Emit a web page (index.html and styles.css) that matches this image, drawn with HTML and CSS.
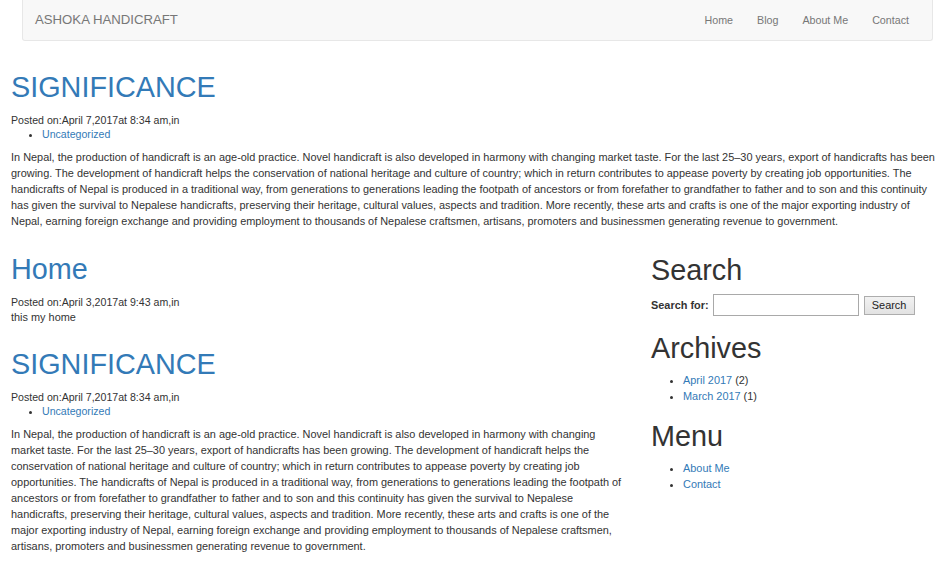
FILE: index.html
```html
<!DOCTYPE html>
<html lang="en">
<head>
<meta charset="utf-8">
<title>Ashoka Handicraft</title>
<link rel="stylesheet" href="styles.css">
</head>
<body>
<header class="navbar">
  <a class="brand" href="#">ASHOKA HANDICRAFT</a>
  <nav class="nav">
    <a href="#">Home</a>
    <a href="#">Blog</a>
    <a href="#">About Me</a>
    <a href="#">Contact</a>
  </nav>
</header>

<main class="page">
  <article class="post">
    <h1 class="post-title"><a href="#">SIGNIFICANCE</a></h1>
    <div class="meta">Posted on:April 7,2017at 8:34 am,in</div>
    <ul class="cats"><li><a href="#">Uncategorized</a></li></ul>
    <p class="body-text with-cats">In Nepal, the production of handicraft is an age-old practice. Novel handicraft is also developed in harmony with changing market taste. For the last 25–30 years, export of handicrafts has been growing. The development of handicraft helps the conservation of national heritage and culture of country; which in return contributes to appease poverty by creating job opportunities. The handicrafts of Nepal is produced in a traditional way, from generations to generations leading the footpath of ancestors or from forefather to grandfather to father and to son and this continuity has given the survival to Nepalese handicrafts, preserving their heritage, cultural values, aspects and tradition. More recently, these arts and crafts is one of the major exporting industry of Nepal, earning foreign exchange and providing employment to thousands of Nepalese craftsmen, artisans, promoters and businessmen generating revenue to government.</p>
  </article>

  <div class="row">
    <section class="content">
      <article class="post">
        <h1 class="post-title"><a href="#">Home</a></h1>
        <div class="meta">Posted on:April 3,2017at 9:43 am,in</div>
        <p class="body-text">this my home</p>
      </article>
      <article class="post">
        <h1 class="post-title"><a href="#">SIGNIFICANCE</a></h1>
        <div class="meta">Posted on:April 7,2017at 8:34 am,in</div>
        <ul class="cats"><li><a href="#">Uncategorized</a></li></ul>
        <p class="body-text with-cats">In Nepal, the production of handicraft is an age-old practice. Novel handicraft is also developed in harmony with changing market taste. For the last 25–30 years, export of handicrafts has been growing. The development of handicraft helps the conservation of national heritage and culture of country; which in return contributes to appease poverty by creating job opportunities. The handicrafts of Nepal is produced in a traditional way, from generations to generations leading the footpath of ancestors or from forefather to grandfather to father and to son and this continuity has given the survival to Nepalese handicrafts, preserving their heritage, cultural values, aspects and tradition. More recently, these arts and crafts is one of the major exporting industry of Nepal, earning foreign exchange and providing employment to thousands of Nepalese craftsmen, artisans, promoters and businessmen generating revenue to government.</p>
      </article>
    </section>

    <aside class="sidebar">
      <div class="widget">
        <h1 class="widget-title">Search</h1>
        <form class="search-form">
          <label class="search-label" for="s">Search for:</label>
          <input class="search-input" type="text" id="s">
          <button class="search-btn" type="button">Search</button>
        </form>
      </div>
      <div class="widget">
        <h1 class="widget-title">Archives</h1>
        <ul class="widget-list">
          <li><a href="#">April 2017</a>&nbsp;(2)</li>
          <li><a href="#">March 2017</a>&nbsp;(1)</li>
        </ul>
      </div>
      <div class="widget">
        <h1 class="widget-title">Menu</h1>
        <ul class="widget-list">
          <li><a href="#">About Me</a></li>
          <li><a href="#">Contact</a></li>
        </ul>
      </div>
    </aside>
  </div>
</main>
</body>
</html>
```

FILE: styles.css
```css
* {
  box-sizing: border-box;
}

html, body {
  margin: 0;
  padding: 0;
  background: #fff;
}

body {
  font-family: "Liberation Sans", Arial, Helvetica, sans-serif;
  font-size: 10.92px;
  line-height: 16px;
  color: #333;
}

a {
  color: #337ab7;
  text-decoration: none;
}

/* Navbar */
.navbar {
  display: flex;
  align-items: center;
  height: 41px;
  margin: 0 6px 0 22px;
  background: #f8f8f8;
  border: 1px solid #e7e7e7;
  border-top: 0;
  border-radius: 0 0 3px 3px;
}

.brand {
  padding-left: 12px;
  font-size: 13.2px;
  color: #777;
  line-height: 20px;
}

.nav {
  display: flex;
  margin-left: auto;
  margin-right: 11px;
}

.nav a {
  padding: 0 12px;
  font-size: 10.7px;
  color: #777;
  line-height: 20px;
}

/* Page */
.page {
  padding: 30px 1px 0 11px;
}

.post-title {
  margin: 0 0 10px;
  font-size: 28.8px;
  line-height: 32px;
  font-weight: 400;
}

.meta {
  font-size: 10.6px;
  line-height: 14px;
}

.cats {
  margin: 0;
  padding-left: 31px;
  font-size: 10.6px;
  line-height: 14px;
}

.body-text {
  margin: 0;
}

.body-text.with-cats {
  margin-top: 8px;
}

.row {
  display: flex;
  margin-top: 24px;
}

.content {
  width: 614px;
  flex: none;
}

.content .post + .post {
  margin-top: 23px;
}

.sidebar {
  margin-left: 26px;
  flex: 1;
  padding-top: 1px;
}

.widget + .widget {
  margin-top: 16px;
}

.widget-title {
  margin: 0 0 8px;
  font-size: 28.8px;
  line-height: 32px;
  font-weight: 400;
  color: #333;
}

.search-form {
  display: flex;
  align-items: center;
  height: 22px;
}

.search-label {
  font-weight: 700;
  margin-right: 4px;
}

.search-input {
  width: 146px;
  height: 22px;
  margin: 0 5px 0 0;
  border: 1px solid #a9a9a9;
  background: #fff;
  padding: 0 2px;
  font: inherit;
}

.search-btn {
  width: 51px;
  height: 19px;
  padding: 0;
  margin: 0;
  border: 1px solid #adadad;
  border-radius: 0;
  background: linear-gradient(#f2f2f2, #e2e2e2);
  font: inherit;
  color: #222;
  line-height: 17px;
}

.widget-list {
  margin: 0;
  padding-left: 32px;
}
```
